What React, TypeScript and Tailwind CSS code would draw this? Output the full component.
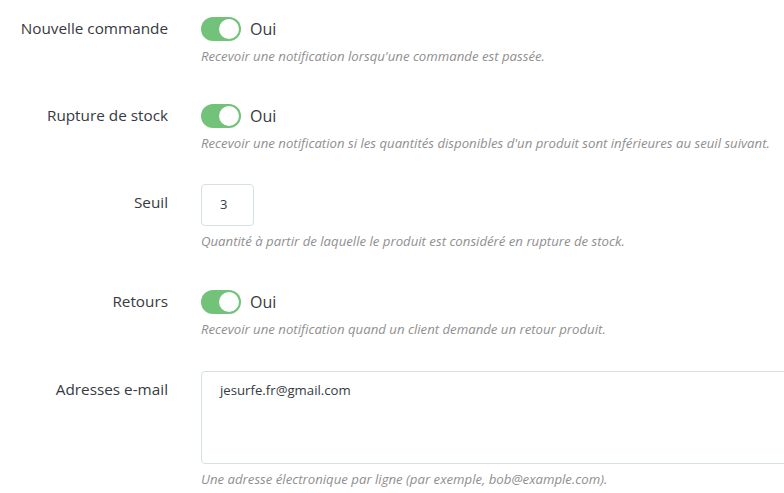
import React from "react";

function Toggle() {
  return (
    <div className="h-[38px] flex items-center gap-[9px]">
      <span className="relative inline-block w-[40px] h-[24px] rounded-full bg-[#72c279]">
        <span className="absolute right-[2px] top-[2px] w-[20px] h-[20px] rounded-full bg-white" />
      </span>
      <span className="text-[16px] text-[#363a41]">Oui</span>
    </div>
  );
}

function Help({ children, mt = "" }: { children: React.ReactNode; mt?: string }) {
  return <div className={`text-[13.2px] italic leading-[16px] text-[#8f8f8f] whitespace-nowrap ${mt}`}>{children}</div>;
}

function Row({ label, children, mb }: { label: string; children: React.ReactNode; mb: string }) {
  return (
    <div className={`flex ${mb}`}>
      <div className="w-[168px] shrink-0 text-right pt-[7px] text-[15.3px] leading-[22px] text-[#363a41] whitespace-nowrap">{label}</div>
      <div className="ml-[33px] flex-1 min-w-0">{children}</div>
    </div>
  );
}

export default function App() {
  return (
    <div className="bg-white w-[784px] h-[493px] overflow-hidden pt-[10px] font-['Open_Sans',sans-serif]">
      <Row label="Nouvelle commande" mb="mb-[33px]">
        <Toggle />
        <Help>Recevoir une notification lorsqu'une commande est passée.</Help>
      </Row>
      <Row label="Rupture de stock" mb="mb-[33px]">
        <Toggle />
        <Help>Recevoir une notification si les quantités disponibles d'un produit sont inférieures au seuil suivant.</Help>
      </Row>
      <Row label="Seuil" mb="mb-[34px]">
        <div className="w-[53px] h-[42px] border border-[#d6e0e4] rounded-[4px] flex items-center pl-[18px] text-[13px] text-[#363a41]">3</div>
        <Help mt="mt-[7px]">Quantité à partir de laquelle le produit est considéré en rupture de stock.</Help>
      </Row>
      <Row label="Retours" mb="mb-[34px]">
        <Toggle />
        <Help>Recevoir une notification quand un client demande un retour produit.</Help>
      </Row>
      <Row label="Adresses e-mail" mb="">
        <div className="w-[640px] h-[93px] border border-[#d6e0e4] rounded-[4px] pl-[18px] pt-[9px] text-[13.2px] leading-[18px] text-[#363a41]">jesurfe.fr@gmail.com</div>
        <Help mt="mt-[7px]">Une adresse électronique par ligne (par exemple, bob@example.com).</Help>
      </Row>
    </div>
  );
}
